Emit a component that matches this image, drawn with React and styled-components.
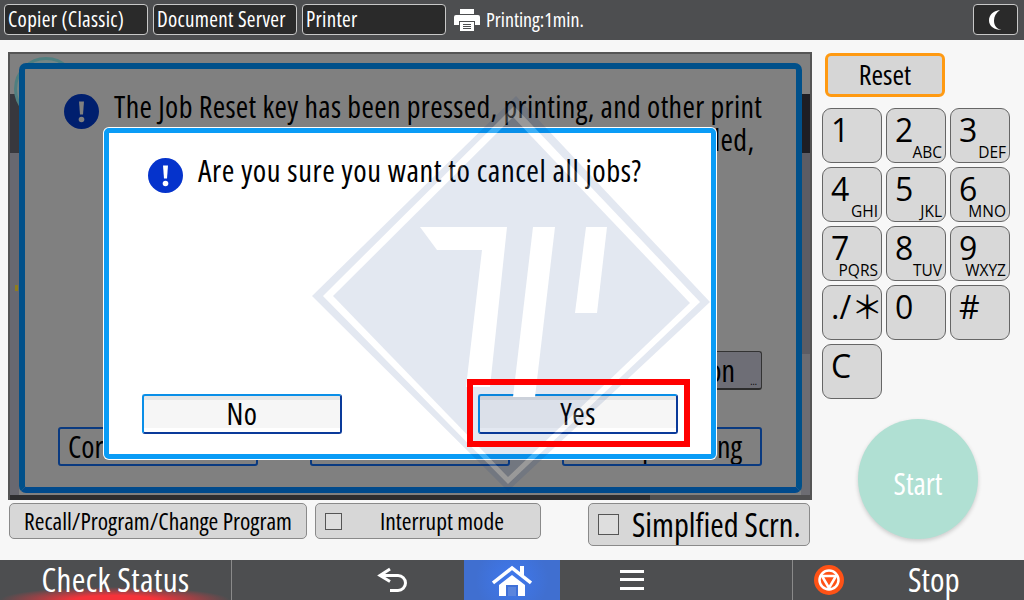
import styled, { createGlobalStyle } from "styled-components"

const Global = createGlobalStyle`
html,body{margin:0;padding:0;background:#f7f7f7;}
body{font-family:"Open Sans","Noto Sans CJK JP",sans-serif;font-stretch:75%;color:#000;}
`

const Page = styled.div`
position:relative;
width:1024px;
height:600px;
overflow:hidden;
display:flex;
flex-direction:column;
`

const TopBar = styled.div`
height:40px;
background:#4d4e50;
display:flex;
align-items:flex-start;
padding:4px 6px 0 4px;
box-sizing:border-box;
`

const Tab = styled.div`
width:144px;
height:31px;
box-sizing:border-box;
margin-right:5px;
background:#2a2a2a;
border:1px solid #c8c8c8;
border-radius:4px;
color:#fff;
font-size:21px;
letter-spacing:.3px;
line-height:29px;
padding-left:3px;
white-space:nowrap;
`

const JobStatus = styled.div`
display:flex;
align-items:center;
height:31px;
margin-left:3px;
gap:6px;
color:#fff;
font-size:20px;
`

const MoonButton = styled.div`
margin-left:auto;
width:45px;
height:31px;
box-sizing:border-box;
background:#2a2a2a;
border:1px solid #c8c8c8;
border-radius:4px;
display:flex;
align-items:center;
justify-content:center;
`

const Main = styled.div`
flex:1;
display:flex;
background:#f7f7f7;
`

const LeftColumn = styled.div`
width:804px;
margin-left:8px;
padding-top:12px;
`

const DimPanel = styled.div`
position:relative;
box-sizing:border-box;
width:804px;
height:448px;
padding:9px 9px 0 9px;
border:2px solid #555;
border-bottom:0;
background:
  linear-gradient(90deg,#2d2d2f 640px,#4f4f50 640px) bottom/100% 5px no-repeat,
  linear-gradient(#808080 0 40px,#38383e 40px 99px,#686870 99px) left/9px 100% no-repeat,
  linear-gradient(#808080 0 40px,#1e1e24 40px 99px,#5c5c64 99px 300px,#6c6c72 300px) right/9px 100% no-repeat,
  #808080;
&::before{
  content:"";
  position:absolute;
  left:4px;
  top:3px;
  width:64px;
  height:64px;
  box-sizing:border-box;
  border:3px solid #4f7f80;
  border-radius:50%;
  background:#748686;
}
&::after{
  content:"";
  position:absolute;
  left:5px;
  top:231px;
  width:3px;
  height:6px;
  background:#8f7d1c;
}
`

const BackWindow = styled.div`
position:relative;
box-sizing:border-box;
width:783px;
height:430px;
border:6px solid #00508a;
border-bottom-color:#004a8c;
border-radius:7px;
background:#808080;
padding:25px 34px 21px 33px;
display:flex;
flex-direction:column;
`

const Message = styled.div`
display:flex;
align-items:flex-start;
gap:15px;
margin-left:6px;
font-size:${(props) => props.$size}px;
letter-spacing:${(props) => props.$track}px;
line-height:33px;
white-space:nowrap;
`

const MessageText = styled.div`
margin-top:-4px;
`

const BackButton = styled.div`
position:relative;
box-sizing:border-box;
width:200px;
height:39px;
border:2px solid #0a3a80;
border-radius:3px;
background:${(props) => props.$fill || "#808080"};
font-size:30px;
line-height:35px;
padding:0 ${(props) => props.$pr || 0}px 0 8px;
text-align:${(props) => props.$align || "left"};
white-space:nowrap;
overflow:hidden;
`

const FunctionButton = styled(BackButton)`
align-self:flex-end;
margin-top:auto;
margin-bottom:37px;
border:1px solid #333;
border-bottom:2px solid #2c2c2c;
padding-right:26px;
line-height:38px;
`

const Dots = styled.span`
position:absolute;
right:4px;
bottom:2px;
font-size:10px;
line-height:10px;
`

const BackRow = styled.div`
display:flex;
justify-content:space-between;
`

const Dialog = styled.div`
position:absolute;
left:94px;
top:74px;
width:612px;
height:331px;
box-sizing:border-box;
border:5px solid #0a9cf6;
border-radius:5px;
box-shadow:0 0 0 1px #fff;
background:#fff;
padding:25px 33px 20px 33px;
display:flex;
flex-direction:column;
`

const DialogRow = styled.div`
margin-top:auto;
display:flex;
justify-content:space-between;
`

const AnswerWrap = styled.div`
position:relative;
`

const AnswerButton = styled.div`
box-sizing:border-box;
width:200px;
height:40px;
border:2px solid;
border-color:#0a8fe8 #0a3a9a #0a3a9a #0a8fe8;
border-radius:3px;
background:linear-gradient(#e6e6e6 0 4px,#f6f6f6 4px 32px,#fff 32px);
text-align:center;
font-size:30px;
letter-spacing:.5px;
line-height:35px;
`

const RedMark = styled.div`
position:absolute;
left:-11px;
top:-15px;
width:223px;
height:68px;
box-sizing:border-box;
border:6px solid #f00;
z-index:3;
`

const Watermark = styled.svg`
position:absolute;
left:0;
top:0;
z-index:2;
pointer-events:none;
`

const LowerRow = styled.div`
display:flex;
align-items:flex-start;
margin-top:3px;
`

const SoftButton = styled.div`
box-sizing:border-box;
width:${(props) => props.$w}px;
height:${(props) => props.$h}px;
margin-left:${(props) => props.$ml || 0};
display:flex;
align-items:center;
justify-content:${(props) => props.$justify || "center"};
border:1px solid #8a8a8a;
border-radius:5px;
background:#d7d7d7;
font-size:${(props) => props.$size}px;
line-height:1.2;
white-space:nowrap;
`

const CheckBox = styled.span`
box-sizing:border-box;
flex:none;
width:${(props) => props.$s}px;
height:${(props) => props.$s}px;
margin:0 ${(props) => props.$gap}px 0 ${(props) => props.$left}px;
border:1px solid #555;
background:#dedede;
`

const RightColumn = styled.div`
margin-left:10px;
padding-top:13px;
display:flex;
flex-direction:column;
align-items:flex-start;
`

const ResetButton = styled.div`
box-sizing:border-box;
width:120px;
height:44px;
margin-left:3px;
border:3px solid #ff9a12;
border-radius:6px;
background:#d6d6d6;
text-align:center;
font-size:28px;
line-height:36px;
`

const Keypad = styled.div`
display:grid;
grid-template-columns:repeat(3,60px);
grid-auto-rows:55px;
gap:4px;
margin-top:11px;
`

const Key = styled.div`
position:relative;
box-sizing:border-box;
border:1px solid #666;
border-radius:9px;
background:#d8d8d8;
font-size:32px;
font-stretch:100%;
line-height:30px;
padding:6px 0 0 8px;
white-space:nowrap;
`

const KeyLetters = styled.span`
position:absolute;
right:3px;
bottom:4px;
font-size:15.5px;
line-height:12px;
`

const StartButton = styled.div`
box-sizing:border-box;
width:120px;
height:120px;
margin:20px 0 0 36px;
padding-top:9px;
border-radius:50%;
background:#b0e0d3;
box-shadow:0 2px 4px rgba(0,0,0,.18);
color:#fff;
font-size:30px;
display:flex;
align-items:center;
justify-content:center;
`

const BottomBar = styled.div`
height:40px;
background:#4d4e50;
display:flex;
color:#fff;
`

const BarCell = styled.div`
box-sizing:border-box;
width:${(props) => props.$w}px;
display:flex;
align-items:center;
justify-content:${(props) => (props.$pl ? "flex-start" : "center")};
padding-left:${(props) => props.$pl || 0}px;
font-size:33px;
line-height:38px;
border-right:${(props) => (props.$divider ? "1px solid #8a8a8a" : "none")};
`

const CheckStatusCell = styled(BarCell)`
letter-spacing:.4px;
background:radial-gradient(ellipse 115px 13px at 115px 100%,#f5333a 0,#f5333a 35%,rgba(245,51,58,0) 100%);
`

const HomeCell = styled(BarCell)`
background:radial-gradient(circle at 50% 50%,#3f78ee 0,#406fd0 70%);
`

const StopCell = styled(BarCell)`
gap:64px;
border-left:1px solid #8a8a8a;
`

const AlertIcon = ({ fill, mark }) => (
  <svg width="35" height="35" viewBox="0 0 35 35" style={{ flex: "none" }}>
    <circle cx="17.5" cy="17.5" r="17.5" fill={fill} />
    <path d="M15 7.5h5l-1 13h-3z" fill={mark} />
    <circle cx="17.5" cy="25.5" r="2.8" fill={mark} />
  </svg>
)

const PrinterIcon = () => (
  <svg width="26" height="22" viewBox="0 0 26 22">
    <path d="M6 0h14v5H6z" fill="#fff" />
    <path d="M2 6h22a2 2 0 0 1 2 2v8h-5v-4H5v4H0V8a2 2 0 0 1 2-2z" fill="#fff" />
    <path d="M6 13h14v9H6z" fill="#fff" />
    <path d="M9 15.5h8M9 17.5h8M9 19.5h8" stroke="#4d4e50" strokeWidth="1" />
  </svg>
)

const MoonIcon = () => (
  <svg width="14" height="20" viewBox="0 0 14 20">
    <path d="M11 0C4 1 0 5 0 10.5S5 20 13 20C7 19 5 15 5 10.5S7 3 11 0z" fill="#fff" />
  </svg>
)

const BackIcon = () => (
  <svg width="32" height="26" viewBox="0 0 32 26">
    <path d="M13 2 3 8.500l10 6" fill="none" stroke="#fff" strokeWidth="3" />
    <path d="M4 8.500h17a7.500 7.500 0 0 1 0 15H13" fill="none" stroke="#fff" strokeWidth="3" />
  </svg>
)

const HomeIcon = () => (
  <svg width="40" height="32" viewBox="0 0 40 32">
    <path d="M1 19 20 4l19 15" fill="none" stroke="#fff" strokeWidth="3.500" />
    <path d="M28 2h4v10l-4-3z" fill="#fff" />
    <path d="M7 21 20 11l13 10v11H7z" fill="#fff" />
    <path d="M14 21h12v11H14z" fill="#3f70d8" />
    <path d="M16 23h8v9h-8z" fill="#fff" opacity=".15" />
  </svg>
)

const MenuIcon = () => (
  <svg width="24" height="20" viewBox="0 0 24 20">
    <path d="M0 0h24v3H0zM0 8h24v3H0zM0 17h24v3H0z" fill="#fff" />
  </svg>
)

const StopIcon = () => (
  <svg width="30" height="30" viewBox="0 0 30 30" style={{ flex: "none" }}>
    <circle cx="15" cy="15" r="15" fill="#ff5216" />
    <circle cx="15" cy="15" r="9.500" fill="none" stroke="#fff" strokeWidth="2.500" />
    <path d="M8 11h14l-7 12z" fill="none" stroke="#fff" strokeWidth="2.500" strokeLinejoin="round" />
  </svg>
)

const keys = [
  ["1"], ["2", "ABC"], ["3", "DEF"],
  ["4", "GHI"], ["5", "JKL"], ["6", "MNO"],
  ["7", "PQRS"], ["8", "TUV"], ["9", "WXYZ"],
  ["./\uFF0A"], ["0"], ["#"],
  ["C"],
]

export default function App() {
  return (
    <Page>
      <Global />

      <TopBar>
        <Tab>Copier (Classic)</Tab>
        <Tab>Document Server</Tab>
        <Tab>Printer</Tab>
        <JobStatus>
          <PrinterIcon />
          Printing:1min.
        </JobStatus>
        <MoonButton>
          <MoonIcon />
        </MoonButton>
      </TopBar>

      <Main>
        <LeftColumn>
          <DimPanel>
            <BackWindow>
              <Message $size={30} $track={0.35}>
                <AlertIcon fill="#001f6e" mark="#808080" />
                <MessageText>
                  The Job Reset key has been pressed, printing, and other print
                  <br />
                  jobs which are still waiting will be cancelled and suspended,
                </MessageText>
              </Message>
              <FunctionButton $fill="#6e6e76" $align="right">
                Function
                <Dots>...</Dots>
              </FunctionButton>
              <BackRow>
                <BackButton>Correct</BackButton>
                <BackButton />
                <BackButton $align="right" $pr={18}>Stop Printing</BackButton>
              </BackRow>
            </BackWindow>

            <Dialog>
              <Message $size={30.5} $track={0.56}>
                <AlertIcon fill="#0533cc" mark="#fff" />
                <MessageText>Are you sure you want to cancel all jobs?</MessageText>
              </Message>
              <DialogRow>
                <AnswerButton>No</AnswerButton>
                <AnswerWrap>
                  <AnswerButton>Yes</AnswerButton>
                  <RedMark />
                </AnswerWrap>
              </DialogRow>
            </Dialog>
          </DimPanel>

          <LowerRow>
            <SoftButton $w={298} $h={36} $ml="1px" $size={23.5}>Recall/Program/Change Program</SoftButton>
            <SoftButton $w={226} $h={36} $ml="8px" $size={23.5} $justify="flex-start">
              <CheckBox $s={17} $left={9} $gap={38} />
              Interrupt mode
            </SoftButton>
            <SoftButton $w={222} $h={43} $ml="47px" $size={32.5} $justify="flex-start">
              <CheckBox $s={21} $left={9} $gap={13} />
              Simplfied Scrn.
            </SoftButton>
          </LowerRow>
        </LeftColumn>

        <RightColumn>
          <ResetButton>Reset</ResetButton>
          <Keypad>
            {keys.map(([digit, letters]) => (
              <Key key={digit}>
                {digit}
                {letters && <KeyLetters>{letters}</KeyLetters>}
              </Key>
            ))}
          </Keypad>
          <StartButton>Start</StartButton>
        </RightColumn>
      </Main>

      <BottomBar>
        <CheckStatusCell $w={232} $divider>Check Status</CheckStatusCell>
        <BarCell $w={232} $pl={145}><BackIcon /></BarCell>
        <HomeCell $w={96}><HomeIcon /></HomeCell>
        <BarCell $w={232} $pl={60}><MenuIcon /></BarCell>
        <StopCell $w={232} $pl={21}>
          <StopIcon />
          Stop
        </StopCell>
      </BottomBar>

      <Watermark width="1024" height="600" viewBox="0 0 1024 600">
        <path
          fillRule="evenodd"
          fill="rgba(0,50,125,.11)"
          d="M516 96 710 302 508 491 312 296ZM514 106 700 302 508 484 323 296Z"
        />
        <path
          fillRule="evenodd"
          fill="rgba(255,255,255,.2)"
          d="M514 106 700 302 508 484 323 296ZM513 117 690 303 508 477 333 296Z"
        />
        <path fill="rgba(0,50,125,.11)" d="M513 117 690 303 508 477 333 296Z" />
        <path fill="#fff" d="M420 227H507L490 387H466L482 250H437Z" />
        <path fill="#fff" d="M533 227H555L535 397H513Z" />
        <path fill="#fff" d="M586 227H607L597 313H575Z" />
      </Watermark>
    </Page>
  )
}
